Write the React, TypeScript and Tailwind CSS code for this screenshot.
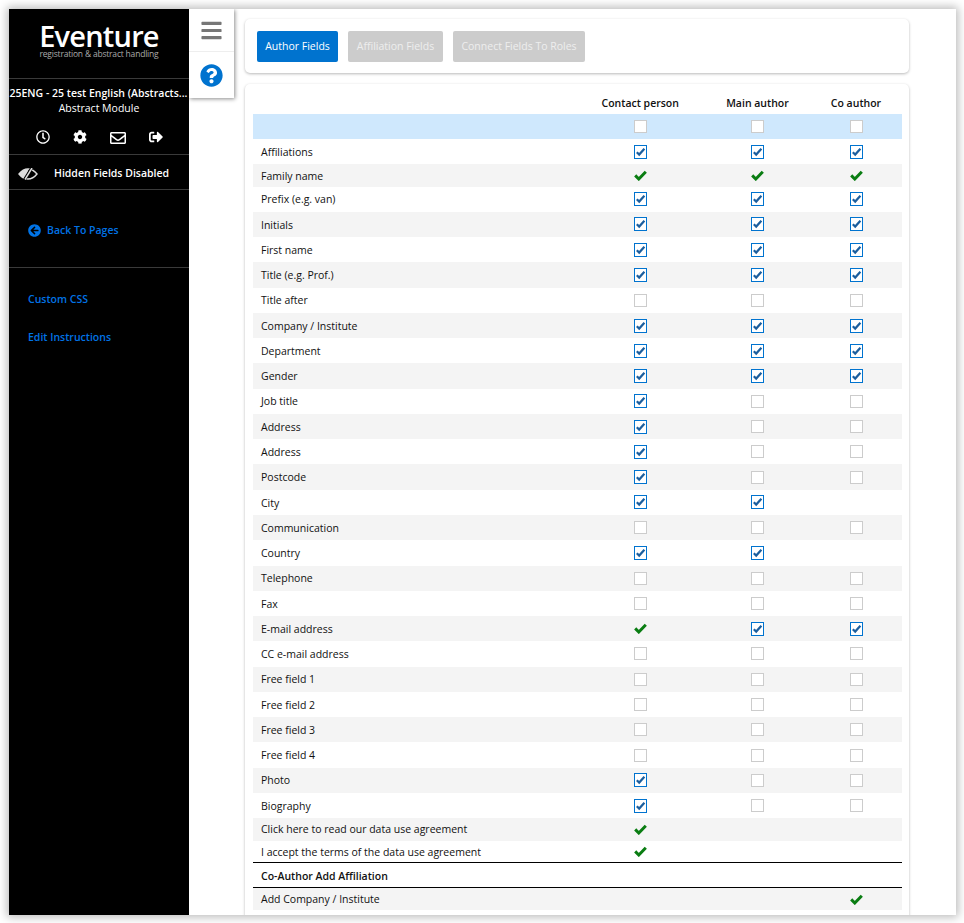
import React from "react";
import { FaRegClock, FaCog, FaRegEnvelope, FaSignOutAlt, FaBars, FaQuestionCircle, FaArrowCircleLeft } from "react-icons/fa";

type K = "c" | "e" | "g" | "n";

const rows: [string, K, K, K][] = [
  ["Affiliations", "c", "c", "c"],
  ["Family name", "g", "g", "g"],
  ["Prefix (e.g. van)", "c", "c", "c"],
  ["Initials", "c", "c", "c"],
  ["First name", "c", "c", "c"],
  ["Title (e.g. Prof.)", "c", "c", "c"],
  ["Title after", "e", "e", "e"],
  ["Company / Institute", "c", "c", "c"],
  ["Department", "c", "c", "c"],
  ["Gender", "c", "c", "c"],
  ["Job title", "c", "e", "e"],
  ["Address", "c", "e", "e"],
  ["Address", "c", "e", "e"],
  ["Postcode", "c", "e", "e"],
  ["City", "c", "c", "n"],
  ["Communication", "e", "e", "e"],
  ["Country", "c", "c", "n"],
  ["Telephone", "e", "e", "e"],
  ["Fax", "e", "e", "e"],
  ["E-mail address", "g", "c", "c"],
  ["CC e-mail address", "e", "e", "e"],
  ["Free field 1", "e", "e", "e"],
  ["Free field 2", "e", "e", "e"],
  ["Free field 3", "e", "e", "e"],
  ["Free field 4", "e", "e", "e"],
  ["Photo", "c", "e", "e"],
  ["Biography", "c", "e", "e"],
  ["Click here to read our data use agreement", "g", "n", "n"],
  ["I accept the terms of the data use agreement", "g", "n", "n"],
];

function Mark({ k }: { k: K }) {
  if (k === "n") return null;
  if (k === "g")
    return (
      <svg viewBox="0 0 13 11" className="mx-auto block h-[11px] w-[13px]">
        <path d="M1.2 5.4 L4.8 9 L11.8 1.8" fill="none" stroke="#0a7d12" strokeWidth="3" />
      </svg>
    );
  if (k === "e")
    return <span className="mx-auto block h-[13px] w-[13px] border border-[#cccccc] bg-white" />;
  return (
    <svg viewBox="0 0 13 14" className="mx-auto block h-[14px] w-[13px]">
      <rect x="0.5" y="0.5" width="12" height="13" fill="#fff" stroke="#0073cf" />
      <path d="M2.8 7.2 L5.2 9.6 L10.4 3.8" fill="none" stroke="#1b5e9e" strokeWidth="2.2" />
    </svg>
  );
}

function Cell({ k, h }: { k: K; h: string }) {
  return (
    <td className={`p-0 align-middle ${h}`}>
      <Mark k={k} />
    </td>
  );
}

export default function App() {
  return (
    <div className="h-[923px] w-[964px] overflow-hidden bg-white p-[9px] font-['Open_Sans',sans-serif] text-[10.5px] text-[#111]">
      <div className="flex h-[906px] w-[947px] overflow-hidden bg-white shadow-[0_0_9px_2px_rgba(0,0,0,0.28)]">
        <aside className="flex w-[180px] shrink-0 flex-col bg-black text-white">
          <div className="flex h-[70px] flex-col items-center border-b border-[#3a3a3a] pt-[14px]">
            <div className="text-[29px] leading-[26px] font-semibold tracking-[-0.8px]">Eventure</div>
            <div className="text-[8.5px] leading-[9px] tracking-[-0.2px] text-[#aaaaaa]">registration &amp; abstract handling</div>
          </div>
          <div className="flex h-[76px] flex-col items-center border-b border-[#3a3a3a]">
            <div className="mt-[7px] w-full overflow-hidden pr-[1px] text-center leading-[14px] font-semibold whitespace-nowrap">25ENG - 25 test English (Abstracts...</div>
            <div className="pt-[1px] leading-[15px]">Abstract Module</div>
            <div className="mt-[14px] flex w-full justify-between pr-[26px] pl-[27px] text-[14px]">
              <FaRegClock />
              <FaCog />
              <FaRegEnvelope className="text-[16px]" />
              <FaSignOutAlt />
            </div>
          </div>
          <div className="flex h-[35px] items-center border-b border-[#3a3a3a] pt-[3px] pl-[9px]">
            <svg viewBox="0 0 20 12" className="h-[12px] w-[20px] text-[#dddddd]">
              <path d="M1 6 Q5 1 10 1 Q15 1 19 6 Q15 11 10 11 Q5 11 1 6Z" fill="none" stroke="currentColor" strokeWidth="1.4" />
              <path d="M1 6 Q5 1 11 1 L7 11 Q3 9.5 1 6Z" fill="currentColor" />
              <path d="M6 12.5 L14 -0.5" stroke="#000" strokeWidth="3" />
              <path d="M7 11.5 L14 0" stroke="currentColor" strokeWidth="1.5" />
            </svg>
            <span className="ml-[16px] font-semibold">Hidden Fields Disabled</span>
          </div>
          <div className="flex h-[78px] items-center gap-[6px] border-b border-[#3a3a3a] pt-[4px] pl-[19px] font-semibold text-[#0073e6]">
            <FaArrowCircleLeft className="text-[13px]" />
            <span>Back To Pages</span>
          </div>
          <div className="mt-[24px] pl-[19px] leading-[15px] font-semibold text-[#0073e6]">Custom CSS</div>
          <div className="mt-[23px] pl-[19px] leading-[15px] font-semibold text-[#0073e6]">Edit Instructions</div>
        </aside>

        <div className="h-[89px] w-[45px] shrink-0 bg-white shadow-[1px_1px_4px_rgba(0,0,0,0.45)]">
          <div className="flex h-[43px] items-center justify-center border-b border-[#eeeeee]">
            <FaBars className="text-[23px] text-[#777777]" />
          </div>
          <div className="flex h-[46px] items-center justify-center">
            <FaQuestionCircle className="text-[23px] text-[#0073cf]" />
          </div>
        </div>

        <main className="ml-[11px] flex w-[664px] shrink-0 flex-col gap-[11px] pt-[10px]">
          <div className="flex h-[54px] shrink-0 items-center gap-[10px] rounded-[5px] bg-white pl-[12px] shadow-[0_1px_3px_rgba(0,0,0,0.28)]">
            <button className="h-[31px] w-[81px] rounded-[2px] bg-[#0073cf] pt-[1px] text-white">Author Fields</button>
            <button className="h-[31px] w-[95px] rounded-[2px] bg-[#cccccc] pt-[1px] text-[#eeeeee]">Affiliation Fields</button>
            <button className="h-[31px] w-[132px] rounded-[2px] bg-[#cccccc] pt-[1px] text-[#eeeeee]">Connect Fields To Roles</button>
          </div>
          <div className="h-[900px] shrink-0 rounded-[5px] bg-white px-[8px] pt-[8px] shadow-[0_1px_3px_rgba(0,0,0,0.28)]">
            <table className="w-[649px] table-fixed border-collapse">
              <colgroup>
                <col className="w-[322.5px]" />
                <col className="w-[129.5px]" />
                <col className="w-[105px]" />
                <col className="w-[92px]" />
              </colgroup>
              <thead>
                <tr>
                  <th className="h-[22px] p-0" />
                  <th className="p-0 pt-[2px] font-semibold">Contact person</th>
                  <th className="p-0 pt-[2px] font-semibold">Main author</th>
                  <th className="p-0 pt-[2px] font-semibold">Co author</th>
                </tr>
              </thead>
              <tbody>
                <tr className="bg-[#cfe8fd]">
                  <td className="h-[25px] p-0" />
                  <Cell k="e" h="h-[25px]" />
                  <Cell k="e" h="h-[25px]" />
                  <Cell k="e" h="h-[25px]" />
                </tr>
                {rows.map((r, i) => {
                  const h = r.slice(1).some((k) => k === "c" || k === "e") ? "h-[25.27px]" : "h-[22.3px]";
                  return (
                    <tr key={i} className={i % 2 === 1 ? "bg-[#f4f4f4]" : "bg-white"}>
                      <td className={`p-0 pt-[2px] pl-[8px] align-middle ${h}`}>{r[0]}</td>
                      <Cell k={r[1]} h={h} />
                      <Cell k={r[2]} h={h} />
                      <Cell k={r[3]} h={h} />
                    </tr>
                  );
                })}
                <tr className="border-y border-black">
                  <td colSpan={4} className="h-[25px] p-0 pt-[3px] pl-[8px] font-semibold">Co-Author Add Affiliation</td>
                </tr>
                <tr className="bg-[#f4f4f4]">
                  <td className="h-[22.5px] p-0 pt-[2px] pl-[8px]">Add Company / Institute</td>
                  <Cell k="n" h="h-[22.5px]" />
                  <Cell k="n" h="h-[22.5px]" />
                  <Cell k="g" h="h-[22.5px]" />
                </tr>
              </tbody>
            </table>
          </div>
        </main>
      </div>
    </div>
  );
}
